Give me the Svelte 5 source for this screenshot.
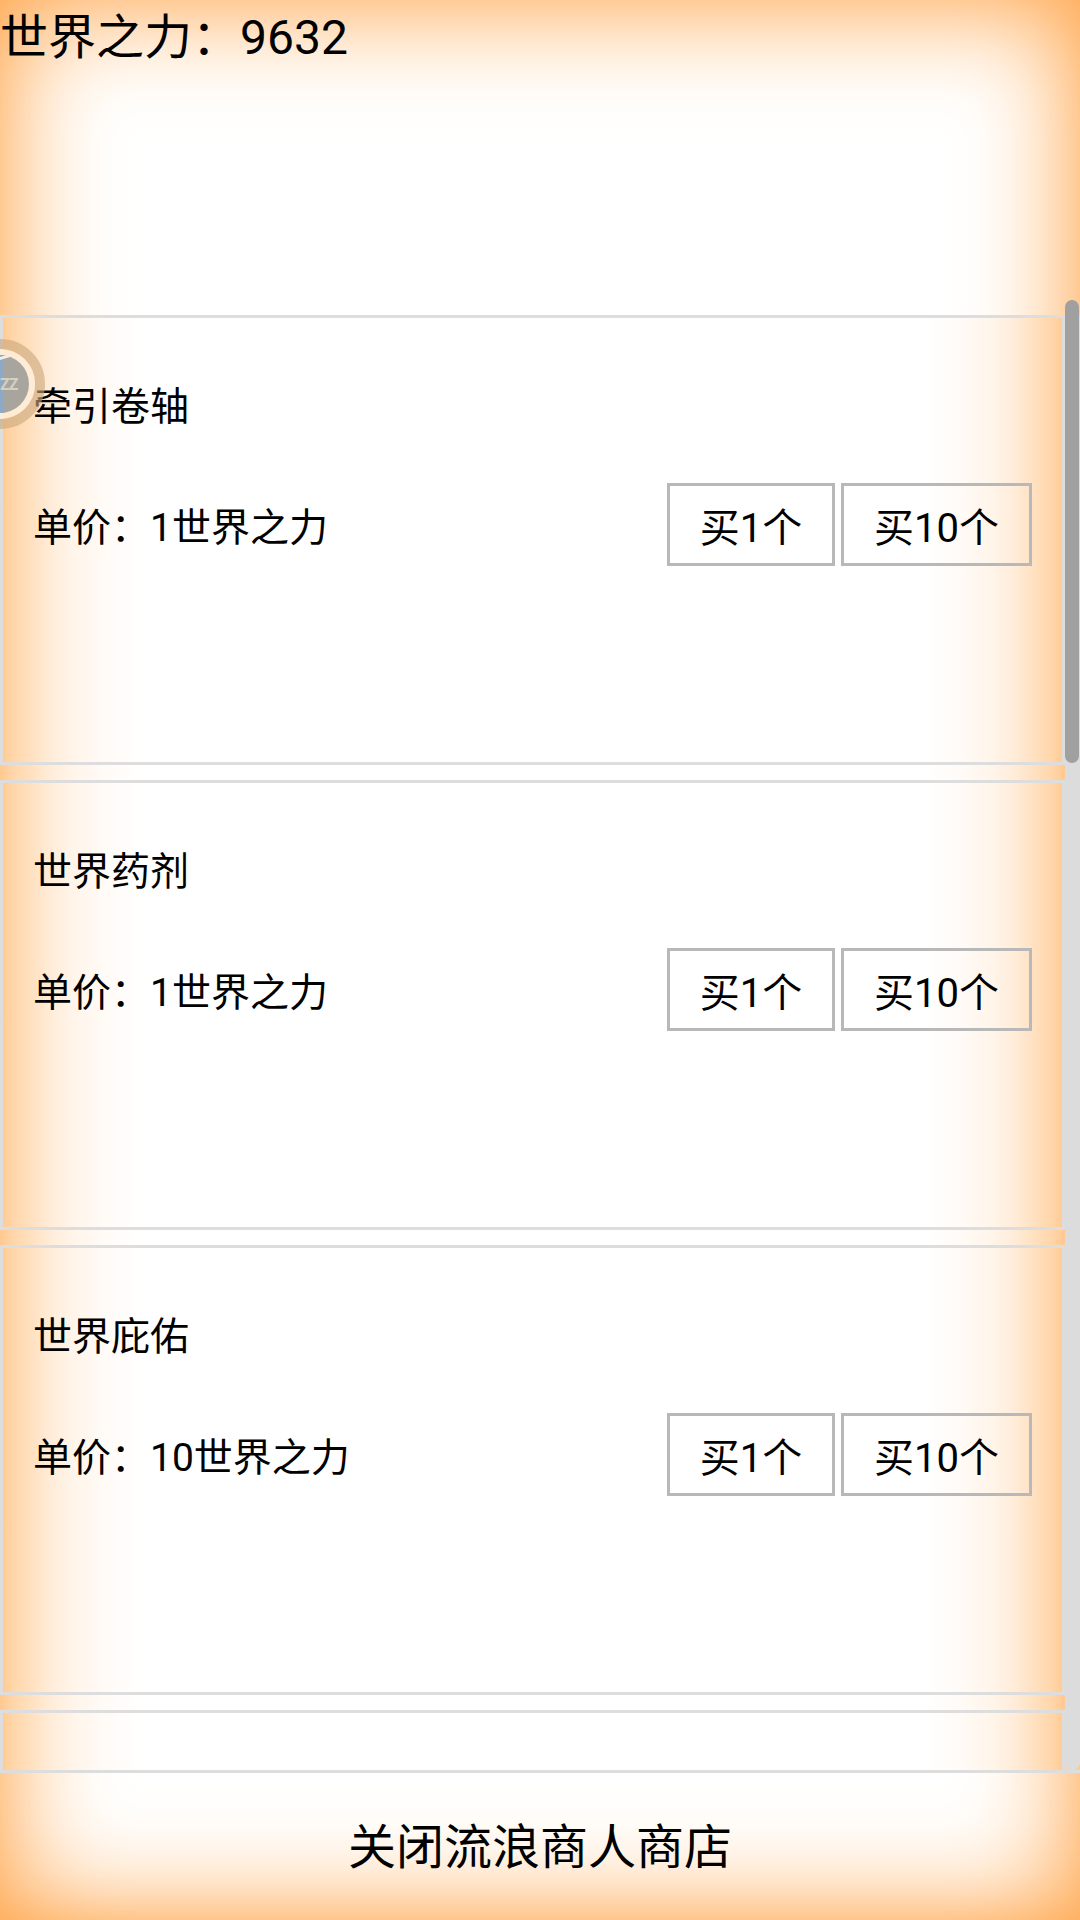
<script>
  const items = [
    { name: "牵引卷轴", price: 1 },
    { name: "世界药剂", price: 1 },
    { name: "世界庇佑", price: 10 },
  ];
  let power = $state(9632);

  function buy(item, count) {
    const cost = item.price * count;
    if (power >= cost) power -= cost;
  }
</script>

<div class="page">
  <header class="top">世界之力：{power}</header>

  <div class="shop">
    <div class="list">
      {#each items as item}
        <div class="card">
          <div class="name">{item.name}</div>
          <div class="row">
            <span>单价：{item.price}世界之力</span>
            <div class="btns">
              <button class="btn one" onclick={() => buy(item, 1)}>买1个</button>
              <button class="btn ten" onclick={() => buy(item, 10)}>买10个</button>
            </div>
          </div>
        </div>
      {/each}
      <!-- next row, only its top edge shows above the footer -->
      <div class="card"></div>
    </div>
    <div class="track"><div class="thumb"></div></div>
  </div>

  <footer class="bottom">关闭流浪商人商店</footer>

  <svg class="bubble" width="46" height="92" viewBox="0 0 46 92">
    <circle cx="0" cy="46" r="40" fill="none" stroke="#c9a67c" stroke-width="10" opacity="0.6" />
    <circle cx="0" cy="46" r="35" fill="#ffedd9" opacity="0.9" />
    <circle cx="0" cy="46" r="29" fill="#a8a59f" />
    <rect x="0" y="17" width="4" height="58" fill="#8ea9c6" />
    <path d="M0 19l10 -3v3l-10 3z" fill="#f2efe8" />
    <text x="0" y="52" class="zz">ZZ</text>
  </svg>
</div>

<style>
  :global(body) {
    background: #fff;
  }
  .page {
    position: relative;
    width: 1080px;
    height: 1920px;
    overflow: hidden;
    display: flex;
    flex-direction: column;
    box-shadow:
      inset 0 0 110px 6px #ffa040,
      inset 0 -12px 40px -14px rgba(255, 160, 64, 0.35);
    font-family: Roboto, "Noto Sans CJK SC", sans-serif;
    color: #000;
  }
  .top {
    height: 300px;
    flex: none;
    font-size: 48px;
    line-height: 76px;
  }
  .shop {
    position: relative;
    height: 1470px;
    flex: none;
  }
  .list {
    width: 1065px;
    height: 100%;
    box-sizing: border-box;
    padding-top: 15px;
    overflow: hidden;
    background-clip: content-box;
    background-image: linear-gradient(
      to right,
      #ffc88f 0,
      #ffd5a8 12px,
      #ffe0bf 30px,
      #ffecd8 50px,
      #fff4e8 70px,
      #fffaf5 100px,
      #fff 140px,
      #fff calc(100% - 140px),
      #fffaf5 calc(100% - 100px),
      #fff4e8 calc(100% - 70px),
      #ffecd8 calc(100% - 50px),
      #ffe0bf calc(100% - 30px),
      #ffd5a8 calc(100% - 12px),
      #ffc88f 100%
    );
  }
  .track {
    position: absolute;
    right: 0;
    top: 0;
    bottom: 0;
    width: 15px;
    background: linear-gradient(to bottom, transparent 15px, #dcdcdc 15px);
    border-radius: 0 0 8px 8px;
  }
  .thumb {
    width: 14px;
    height: 463px;
    background: #a0a0a0;
    border-radius: 7px;
  }
  .card {
    height: 450px;
    box-sizing: border-box;
    margin-bottom: 15px;
    border: 3px solid #ddd;
    padding: 53px 30px 0 30px;
    font-size: 39px;
  }
  .name {
    line-height: 72px;
  }
  .row {
    display: flex;
    justify-content: space-between;
    align-items: center;
    margin-top: 39px;
  }
  .btns {
    display: flex;
    gap: 6px;
    margin-top: 1px;
  }
  .btn {
    height: 83px;
    box-sizing: border-box;
    border: 3px solid #b8b8b8;
    background: none;
    font: inherit;
    font-size: 40px;
    color: inherit;
    padding: 0;
  }
  .one {
    width: 168px;
  }
  .ten {
    width: 191px;
  }
  .bottom {
    flex: 1;
    border-top: 3px solid #ddd;
    display: flex;
    align-items: center;
    justify-content: center;
    font-size: 48px;
    padding-bottom: 7px;
  }
  .bubble {
    position: absolute;
    left: 0;
    top: 338px;
  }
  .zz {
    font-size: 16px;
    fill: #d6d0c2;
    font-weight: 700;
    letter-spacing: -1px;
  }
</style>
